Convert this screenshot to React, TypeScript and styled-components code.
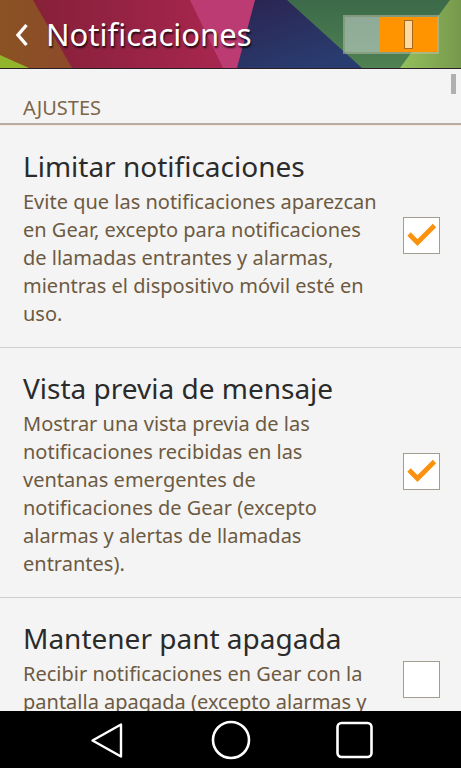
import React from "react";
import styled, { createGlobalStyle } from "styled-components";

const GlobalStyle = createGlobalStyle`
  * { box-sizing: border-box; }
  html, body, #root { height: 100%; }
  body {
    margin: 0;
    background: #f4f4f4;
    font-family: "Noto Sans", sans-serif;
    font-variant-ligatures: none;
    overflow: hidden;
  }
`;

const Screen = styled.div`
  display: flex;
  flex-direction: column;
  height: 100vh;
  overflow: hidden;
`;

const Header = styled.header`
  position: relative;
  flex: none;
  display: flex;
  align-items: center;
  height: 69px;
  padding: 0 22px 0 8px;
  border-bottom: 1px solid #2b2029;
  overflow: hidden;
`;

const Backdrop = styled.svg`
  position: absolute;
  inset: 0;
  width: 100%;
  height: 100%;
`;

const BackButton = styled.button`
  position: relative;
  display: flex;
  align-items: center;
  justify-content: center;
  width: 28px;
  height: 40px;
  padding: 0;
  border: 0;
  background: none;
`;

const PageTitle = styled.h1`
  position: relative;
  flex: 1;
  margin: 0 0 0 10px;
  color: #fff;
  font-size: 31px;
  line-height: 40px;
  font-weight: 400;
  text-shadow: 1px 2px 2px rgba(0, 0, 0, 0.8);
`;

const Toggle = styled.label`
  position: relative;
  display: flex;
  justify-content: flex-end;
  width: 96px;
  height: 39px;
  border: 2px solid rgba(196, 196, 176, 0.5);
  background: rgba(192, 208, 198, 0.62);
  background-clip: padding-box;
`;

const ToggleInput = styled.input`
  position: absolute;
  inset: 0;
  width: 100%;
  height: 100%;
  margin: 0;
  opacity: 0;
`;

const Thumb = styled.span`
  display: flex;
  align-items: center;
  justify-content: center;
  width: 57px;
  background: #ff9400;

  &::after {
    content: "";
    width: 7px;
    height: 27px;
    border: 1px solid #a8691a;
    background: #ffd9a0;
  }
`;

const Content = styled.main`
  position: relative;
  flex: 1;
  min-height: 0;
  overflow: hidden;
  background: #f4f4f4;
`;

const ScrollMark = styled.div`
  position: absolute;
  top: 5px;
  right: 5px;
  width: 5px;
  height: 20px;
  background: #b0b0b0;
`;

const SectionTitle = styled.h2`
  margin: 0 0 1px;
  padding: 25px 23px 2px;
  border-bottom: 2px solid #b5aca6;
  box-shadow: 0 1px 0 #f8e9df;
  color: #7c6549;
  font-size: 20px;
  line-height: 27px;
  font-weight: 400;
`;

const Item = styled.label`
  display: flex;
  align-items: center;
  justify-content: space-between;
  min-height: 165px;
  padding: 20px 21px 19px 23px;
  border-bottom: 1px solid #cfcfcf;
`;

const ItemText = styled.span`
  align-self: flex-start;
  flex: 1;
  min-width: 0;
  padding-right: 10px;
`;

const ItemTitle = styled.span`
  display: block;
  margin-bottom: 2px;
  color: #2b2b2b;
  font-size: 28px;
  line-height: 40px;
`;

const ItemDescription = styled.span`
  display: block;
  color: #6d5a42;
  font-size: 20px;
  line-height: 28px;
`;

const Line = styled.span`
  display: block;
  white-space: nowrap;
`;

const CheckWrap = styled.span`
  display: grid;
  flex: none;
  margin-bottom: 3px;
`;

const CheckBox = styled.input`
  appearance: none;
  grid-area: 1 / 1;
  width: 37px;
  height: 37px;
  margin: 0;
  border: 1px solid #a39c91;
  background: #fff;
`;

const Tick = styled.svg`
  grid-area: 1 / 1;
  width: 37px;
  height: 37px;
  pointer-events: none;
`;

const NavBar = styled.nav`
  flex: none;
  display: flex;
  justify-content: center;
  gap: 84px;
  height: 57px;
  background: #000;
`;

const NavButton = styled.button`
  display: flex;
  align-items: center;
  justify-content: center;
  width: 40px;
  padding: 0;
  border: 0;
  background: none;
`;

type Setting = { title: string; lines: string[]; checked: boolean };

const settings: Setting[] = [
  {
    title: "Limitar notificaciones",
    lines: [
      "Evite que las notificaciones aparezcan",
      "en Gear, excepto para notificaciones",
      "de llamadas entrantes y alarmas,",
      "mientras el dispositivo móvil esté en",
      "uso.",
    ],
    checked: true,
  },
  {
    title: "Vista previa de mensaje",
    lines: [
      "Mostrar una vista previa de las",
      "notificaciones recibidas en las",
      "ventanas emergentes de",
      "notificaciones de Gear (excepto",
      "alarmas y alertas de llamadas",
      "entrantes).",
    ],
    checked: true,
  },
  {
    title: "Mantener pant apagada",
    lines: ["Recibir notificaciones en Gear con la", "pantalla apagada (excepto alarmas y"],
    checked: false,
  },
];

function SettingItem({ title, lines, checked }: Setting) {
  const [on, setOn] = React.useState(checked);
  return (
    <Item>
      <ItemText>
        <ItemTitle>{title}</ItemTitle>
        <ItemDescription>
          {lines.map((line) => (
            <Line key={line}>{line} </Line>
          ))}
        </ItemDescription>
      </ItemText>
      <CheckWrap>
        <CheckBox type="checkbox" checked={on} onChange={() => setOn(!on)} />
        {on && (
          <Tick viewBox="0 0 37 37" fill="none" aria-hidden="true">
            <path d="M6 17 14.5 25.5 31.5 8.5" stroke="#fa9210" strokeWidth="4.8" />
          </Tick>
        )}
      </CheckWrap>
    </Item>
  );
}

export default function App() {
  const [enabled, setEnabled] = React.useState(true);
  return (
    <>
      <GlobalStyle />
      <Screen>
        <Header>
          <Backdrop viewBox="0 0 461 68" preserveAspectRatio="none" aria-hidden="true">
            <defs>
              <linearGradient id="brown"><stop stopColor="#8a5222" /><stop offset="1" stopColor="#8d4a2b" /></linearGradient>
              <linearGradient id="wine"><stop stopColor="#862038" /><stop offset="1" stopColor="#a82650" /></linearGradient>
              <linearGradient id="navy" x2="0.6" y2="1"><stop stopColor="#2b2450" /><stop offset="1" stopColor="#293c70" /></linearGradient>
              <linearGradient id="forest" x2="0" y2="1"><stop stopColor="#3c6a4a" /><stop offset="1" stopColor="#4f8152" /></linearGradient>
              <linearGradient id="leaf"><stop stopColor="#94c05c" /><stop offset="1" stopColor="#76984c" /></linearGradient>
            </defs>
            <path d="M0 0H34L73 68H0Z" fill="url(#brown)" />
            <path d="M0 55 29 68H0Z" fill="#93b52c" />
            <path d="M33 0H191L224 68H72Z" fill="url(#wine)" />
            <path d="M190 0H256L238 68H223Z" fill="#bd3b73" />
            <path d="M255 0H288L363 68H237Z" fill="url(#navy)" />
            <path d="M287 0H451L401 68H362Z" fill="url(#forest)" />
            <path d="M450 0H461V68H400Z" fill="url(#leaf)" />
          </Backdrop>
          <BackButton aria-label="Atrás">
            <svg width="16" height="26" viewBox="0 0 16 26" fill="none">
              <path d="M12.5 4 4 14 12.5 24" stroke="#fff" strokeWidth="3.4" />
            </svg>
          </BackButton>
          <PageTitle>Notificaciones</PageTitle>
          <Toggle>
            <ToggleInput
              type="checkbox"
              role="switch"
              aria-label="Notificaciones"
              checked={enabled}
              onChange={() => setEnabled(!enabled)}
            />
            <Thumb />
          </Toggle>
        </Header>
        <Content>
          <ScrollMark />
          <SectionTitle>AJUSTES</SectionTitle>
          {settings.map((setting) => (
            <SettingItem key={setting.title} {...setting} />
          ))}
        </Content>
        <NavBar>
          <NavButton aria-label="Atrás">
            <svg width="40" height="40" viewBox="0 0 40 40" fill="none" stroke="#fff" strokeWidth="2.4" strokeLinejoin="round">
              <path d="M34 4.5V36.5L5.5 20.5Z" />
            </svg>
          </NavButton>
          <NavButton aria-label="Inicio">
            <svg width="40" height="40" viewBox="0 0 40 40" fill="none" stroke="#fff" strokeWidth="2.6">
              <circle cx="20" cy="20" r="18" />
            </svg>
          </NavButton>
          <NavButton aria-label="Recientes">
            <svg width="40" height="40" viewBox="0 0 40 40" fill="none" stroke="#fff" strokeWidth="2.6">
              <rect x="2.5" y="3" width="34" height="34" rx="4" />
            </svg>
          </NavButton>
        </NavBar>
      </Screen>
    </>
  );
}
